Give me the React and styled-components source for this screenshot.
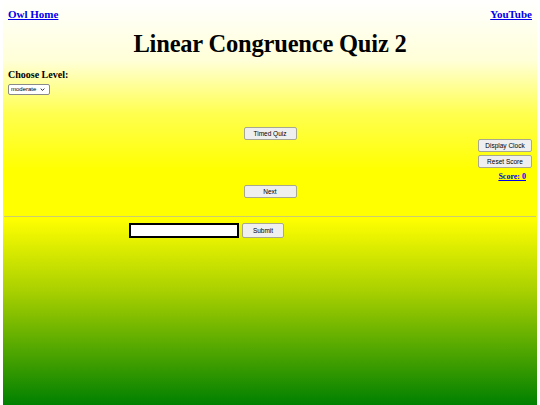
import React from "react";
import styled, { createGlobalStyle } from "styled-components";

const GlobalStyle = createGlobalStyle`
  html, body {
    margin: 0;
    padding: 0;
    background: #ffffff;
  }
  body {
    font-family: "Liberation Serif", "Times New Roman", serif;
  }
`;

const App = () => {
  return (
    <>
      <GlobalStyle />
      <Page>
        <TopBar>
          <NavLink href="#">Owl Home</NavLink>
          <NavLink href="#">YouTube</NavLink>
        </TopBar>
        <Title>Linear Congruence Quiz 2</Title>
        <LevelBlock>
          <LevelLabel>Choose Level:</LevelLabel>
          <SelectWrap>
            <LevelSelect defaultValue="moderate">
              <option value="easy">easy</option>
              <option value="moderate">moderate</option>
              <option value="hard">hard</option>
            </LevelSelect>
            <Chevron viewBox="0 0 8 5" aria-hidden="true">
              <path d="M1 1 L4 4 L7 1" fill="none" stroke="#000" strokeWidth="1.4" />
            </Chevron>
          </SelectWrap>
        </LevelBlock>
        <QuizArea>
          <Spacer />
          <CenterColumn>
            <Button $width={53}>Timed Quiz</Button>
            <Button $width={53}>Next</Button>
          </CenterColumn>
          <SideColumn>
            <Button $width={54}>Display Clock</Button>
            <Button $width={54}>Reset Score</Button>
            <Score href="#">Score: 0</Score>
          </SideColumn>
        </QuizArea>
        <Divider />
        <AnswerRow>
          <AnswerInput type="text" />
          <Button $width={42} $height={15}>Submit</Button>
        </AnswerRow>
      </Page>
    </>
  );
};

export default App;

const Page = styled.div`
  margin: 0 3px;
  padding: 0 5px;
  height: 405px;
  box-sizing: border-box;
  overflow: hidden;
  background: linear-gradient(
    to bottom,
    #ffffff 0%,
    #ffffd8 15%,
    #ffff50 28%,
    #ffff00 42%,
    #ffff00 54%,
    #a8d000 72%,
    #008000 100%
  );
`;

const TopBar = styled.div`
  display: flex;
  justify-content: space-between;
  padding-top: 8px;
`;

const NavLink = styled.a`
  font-size: 11px;
  font-weight: bold;
  color: #0000ee;
  text-decoration: underline;
`;

const Title = styled.h1`
  margin: 8px 0 0;
  text-align: center;
  font-size: 24.5px;
  letter-spacing: -0.2px;
  line-height: 32px;
  font-weight: bold;
  color: #000;
`;

const LevelBlock = styled.div`
  margin-top: 9px;
  display: flex;
  flex-direction: column;
  align-items: flex-start;
  gap: 3px;
`;

const LevelLabel = styled.div`
  font-size: 10px;
  font-weight: bold;
  line-height: 12px;
`;

const SelectWrap = styled.div`
  position: relative;
  width: 42px;
  height: 11px;
`;

const LevelSelect = styled.select`
  display: block;
  appearance: none;
  box-sizing: border-box;
  font-family: "Liberation Sans", Arial, sans-serif;
  font-size: 6px;
  line-height: 9px;
  width: 42px;
  height: 11px;
  padding: 0 0 0 2px;
  margin: 0;
  color: #000;
  border: 1px solid #8a8a8a;
  border-radius: 2px;
  background: #fff;
`;

const Chevron = styled.svg`
  position: absolute;
  right: 5px;
  top: 4px;
  width: 5px;
  height: 3px;
  pointer-events: none;
`;

const QuizArea = styled.div`
  display: grid;
  grid-template-columns: 1fr auto 1fr;
  margin-top: 32px;
`;

const Spacer = styled.div``;

const CenterColumn = styled.div`
  display: flex;
  flex-direction: column;
  align-items: center;
  gap: 45px;
`;

const SideColumn = styled.div`
  display: flex;
  flex-direction: column;
  align-items: flex-end;
  gap: 3px;
  padding-top: 12px;
`;

const Button = styled.button`
  font-family: "Liberation Sans", Arial, sans-serif;
  font-size: 6.5px;
  width: ${(p) => p.$width}px;
  height: ${(p) => p.$height || 13}px;
  padding: 0;
  color: #000;
  background: #efefef;
  border: 1px solid #a8a890;
  border-radius: 2px;
`;

const Score = styled.a`
  font-size: 8px;
  font-weight: bold;
  color: #0000ee;
  text-decoration: underline;
  margin-top: 1px;
  margin-right: 6px;
`;

const Divider = styled.hr`
  margin: 18px -4px 0;
  border: none;
  border-top: 1px solid #cccc70;
`;

const AnswerRow = styled.div`
  display: flex;
  align-items: center;
  gap: 3px;
  margin-top: 6px;
  padding-left: 121px;
`;

const AnswerInput = styled.input`
  box-sizing: border-box;
  width: 110px;
  height: 15px;
  border: 2px solid #000;
  background: #fff;
  padding: 0 2px;
`;
